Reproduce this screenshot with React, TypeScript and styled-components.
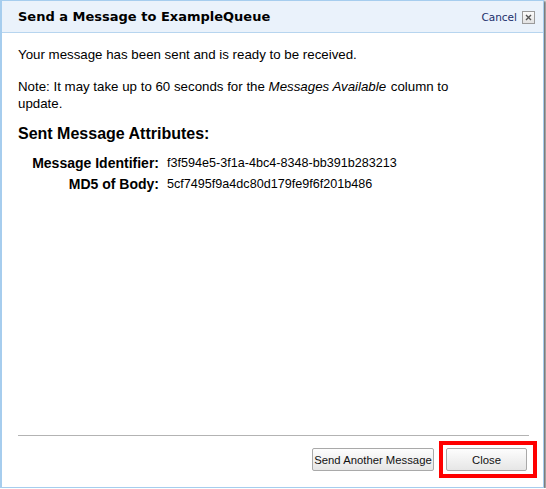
import React from "react";
import styled, { createGlobalStyle } from "styled-components";

const GlobalStyle = createGlobalStyle`
  html, body {
    margin: 0;
    padding: 0;
    background: #ffffff;
  }
  body {
    font-family: "Liberation Sans", Arial, sans-serif;
  }
`;

const Dialog = styled.div`
  box-sizing: border-box;
  width: 544px;
  height: 488px;
  border: 1px solid #a6cdee;
  border-left-width: 2px;
  box-shadow: 2px 1px 2px rgba(0, 0, 0, 0.55);
  background: #ffffff;
  display: flex;
  flex-direction: column;
`;

const Header = styled.div`
  height: 32px;
  box-sizing: border-box;
  background: #eaf2fb;
  border-bottom: 1px solid #b7d5ef;
  display: flex;
  align-items: center;
  padding: 0 8px 0 16px;
`;

const Title = styled.h1`
  flex: 1;
  margin: 0;
  font-family: "DejaVu Sans", Verdana, sans-serif;
  font-size: 13px;
  font-weight: bold;
  color: #000;
`;

const CancelLink = styled.a`
  font-family: "DejaVu Sans", Tahoma, sans-serif;
  font-size: 10.5px;
  color: #1b2f6b;
  text-decoration: none;
  margin-right: 5px;
`;

const CloseBox = styled.span`
  width: 11px;
  height: 11px;
  border: 1px solid #9a9a9a;
  background: linear-gradient(#fbfbfb, #e2e2e2);
  display: flex;
  align-items: center;
  justify-content: center;
  margin-top: 1px;
`;

const Body = styled.div`
  flex: 1;
  display: flex;
  flex-direction: column;
  padding: 13px 17px 0 16px;
  color: #000;
`;

const Para = styled.p`
  margin: 0 0 15px;
  font-size: 13.3px;
  line-height: 17px;
`;

const Em = styled.i`
  padding-right: 1px;
`;

const SubHeading = styled.h2`
  margin: -3px 0 0;
  font-size: 16px;
  line-height: 19px;
  font-weight: bold;
`;

const AttrGrid = styled.div`
  display: grid;
  grid-template-columns: 141px auto;
  column-gap: 8px;
  row-gap: 5px;
  margin-top: 12px;
  font-size: 12.6px;
  line-height: 16px;
`;

const AttrLabel = styled.div`
  text-align: right;
  font-weight: bold;
  font-size: 14px;
`;

const AttrValue = styled.div``;

const Footer = styled.div`
  margin: 0 14px 0 16px;
  border-top: 1px solid #b3b3b3;
  height: 52px;
  display: flex;
  justify-content: flex-end;
  align-items: flex-start;
  padding-top: 12px;
  box-sizing: border-box;
  gap: 5px;
`;

const Highlight = styled.div`
  border: 4px solid #ff0000;
  padding: 3px 6px 3px 3px;
  margin-top: -7px;
  margin-right: -8px;
`;

const Button = styled.button<{ $width: number }>`
  width: ${(p) => p.$width}px;
  height: 23px;
  box-sizing: border-box;
  border: 1px solid #a9a9a9;
  border-radius: 2px;
  background: linear-gradient(#fdfdfd, #e6e6e6);
  font-family: "Liberation Sans", Arial, sans-serif;
  font-size: 11.3px;
  white-space: nowrap;
  color: #111;
  padding: 0;
`;

export default function App() {
  return (
    <>
      <GlobalStyle />
      <Dialog>
        <Header>
          <Title>Send a Message to ExampleQueue</Title>
          <CancelLink href="#">Cancel</CancelLink>
          <CloseBox>
            <svg width="7" height="7" viewBox="0 0 7 7">
              <path d="M1 1 L6 6 M6 1 L1 6" stroke="#555" strokeWidth="1.4" />
            </svg>
          </CloseBox>
        </Header>
        <Body>
          <Para>Your message has been sent and is ready to be received.</Para>
          <Para>
            Note: It may take up to 60 seconds for the <Em>Messages Available</Em>{" "}
            column to
            <br />
            update.
          </Para>
          <SubHeading>Sent Message Attributes:</SubHeading>
          <AttrGrid>
            <AttrLabel>Message Identifier:</AttrLabel>
            <AttrValue>f3f594e5-3f1a-4bc4-8348-bb391b283213</AttrValue>
            <AttrLabel>MD5 of Body:</AttrLabel>
            <AttrValue>5cf7495f9a4dc80d179fe9f6f201b486</AttrValue>
          </AttrGrid>
        </Body>
        <Footer>
          <Button $width={122}>Send Another Message</Button>
          <Highlight>
            <Button $width={81}>Close</Button>
          </Highlight>
        </Footer>
      </Dialog>
    </>
  );
}
